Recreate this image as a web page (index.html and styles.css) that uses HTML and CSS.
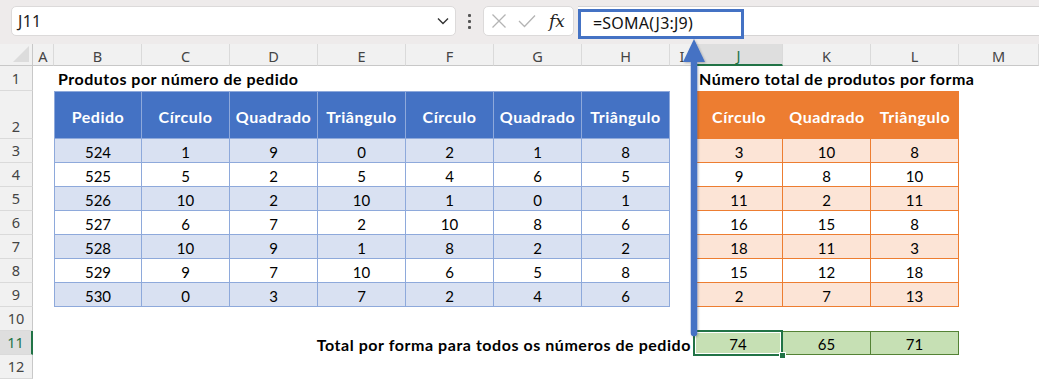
FILE: index.html
```html
<!DOCTYPE html>
<html>
<head>
<meta charset="utf-8">
<link rel="stylesheet" href="styles.css">
</head>
<body>
<div class="topbar">
  <div class="namebox">
    <span class="nb-text">J11</span>
    <svg class="chev" width="12" height="8" viewBox="0 0 12 8"><path d="M1 1.5 L6 6.5 L11 1.5" fill="none" stroke="#333" stroke-width="1.4"/></svg>
  </div>
  <div class="dots"><i></i><i></i><i></i></div>
  <div class="fxbox">
    <svg width="16" height="16" viewBox="0 0 16 16"><path d="M1.5 1.5 L14.5 14.5 M14.5 1.5 L1.5 14.5" stroke="#b4b4b4" stroke-width="1.3" fill="none"/></svg>
    <svg width="18" height="14" viewBox="0 0 18 14"><path d="M1 7 L6.5 12.5 L17 1.5" stroke="#b4b4b4" stroke-width="1.3" fill="none"/></svg>
    <span class="fx">fx</span>
  </div>
  <div class="formula">
    <div class="fbox">=SOMA(J3:J9)</div>
  </div>
</div>

<div class="sheet">
  <!-- column header row -->
  <div class="corner"></div>
  <div class="ch">A</div>
  <div class="ch">B</div>
  <div class="ch">C</div>
  <div class="ch">D</div>
  <div class="ch">E</div>
  <div class="ch">F</div>
  <div class="ch">G</div>
  <div class="ch">H</div>
  <div class="ch">I</div>
  <div class="ch sel">J</div>
  <div class="ch">K</div>
  <div class="ch">L</div>
  <div class="ch">M</div>

  <!-- row 1 -->
  <div class="rh">1</div>
  <div class="c"></div>
  <div class="c title span7">Produtos por número de pedido</div>
  <div class="c"></div>
  <div class="c title span4">Número total de produtos por forma</div>

  <!-- row 2 -->
  <div class="rh">2</div>
  <div class="c"></div>
  <div class="bh first">Pedido</div>
  <div class="bh">Círculo</div>
  <div class="bh">Quadrado</div>
  <div class="bh">Triângulo</div>
  <div class="bh">Círculo</div>
  <div class="bh">Quadrado</div>
  <div class="bh">Triângulo</div>
  <div class="c"></div>
  <div class="oh">Círculo</div>
  <div class="oh">Quadrado</div>
  <div class="oh">Triângulo</div>
  <div class="c"></div>

  <!-- row 3 -->
  <div class="rh">3</div>
  <div class="c"></div>
  <div class="bd alt first">524</div><div class="bd alt">1</div><div class="bd alt">9</div><div class="bd alt">0</div><div class="bd alt">2</div><div class="bd alt">1</div><div class="bd alt">8</div>
  <div class="c"></div>
  <div class="od alt ofirst">3</div><div class="od alt">10</div><div class="od alt">8</div>
  <div class="c"></div>

  <!-- row 4 -->
  <div class="rh">4</div>
  <div class="c"></div>
  <div class="bd first">525</div><div class="bd">5</div><div class="bd">2</div><div class="bd">5</div><div class="bd">4</div><div class="bd">6</div><div class="bd">5</div>
  <div class="c"></div>
  <div class="od ofirst">9</div><div class="od">8</div><div class="od">10</div>
  <div class="c"></div>

  <!-- row 5 -->
  <div class="rh">5</div>
  <div class="c"></div>
  <div class="bd alt first">526</div><div class="bd alt">10</div><div class="bd alt">2</div><div class="bd alt">10</div><div class="bd alt">1</div><div class="bd alt">0</div><div class="bd alt">1</div>
  <div class="c"></div>
  <div class="od alt ofirst">11</div><div class="od alt">2</div><div class="od alt">11</div>
  <div class="c"></div>

  <!-- row 6 -->
  <div class="rh">6</div>
  <div class="c"></div>
  <div class="bd first">527</div><div class="bd">6</div><div class="bd">7</div><div class="bd">2</div><div class="bd">10</div><div class="bd">8</div><div class="bd">6</div>
  <div class="c"></div>
  <div class="od ofirst">16</div><div class="od">15</div><div class="od">8</div>
  <div class="c"></div>

  <!-- row 7 -->
  <div class="rh">7</div>
  <div class="c"></div>
  <div class="bd alt first">528</div><div class="bd alt">10</div><div class="bd alt">9</div><div class="bd alt">1</div><div class="bd alt">8</div><div class="bd alt">2</div><div class="bd alt">2</div>
  <div class="c"></div>
  <div class="od alt ofirst">18</div><div class="od alt">11</div><div class="od alt">3</div>
  <div class="c"></div>

  <!-- row 8 -->
  <div class="rh">8</div>
  <div class="c"></div>
  <div class="bd first">529</div><div class="bd">9</div><div class="bd">7</div><div class="bd">10</div><div class="bd">6</div><div class="bd">5</div><div class="bd">8</div>
  <div class="c"></div>
  <div class="od ofirst">15</div><div class="od">12</div><div class="od">18</div>
  <div class="c"></div>

  <!-- row 9 -->
  <div class="rh">9</div>
  <div class="c"></div>
  <div class="bd alt first">530</div><div class="bd alt">0</div><div class="bd alt">3</div><div class="bd alt">7</div><div class="bd alt">2</div><div class="bd alt">4</div><div class="bd alt">6</div>
  <div class="c"></div>
  <div class="od alt ofirst">2</div><div class="od alt">7</div><div class="od alt">13</div>
  <div class="c"></div>

  <!-- row 10 -->
  <div class="rh">10</div>
  <div class="c spanrest"></div>

  <!-- row 11 -->
  <div class="rh sel">11</div>
  <div class="c"></div>
  <div class="c total span8">Total por forma para todos os números de pedido</div>
  <div class="gd gfirst active">74</div>
  <div class="gd">65</div>
  <div class="gd">71</div>
  <div class="c"></div>

  <!-- row 12 -->
  <div class="rh">12</div>
  <div class="c spanrest"></div>
</div>

<svg class="arrow" width="30" height="310" viewBox="0 0 30 310">
  <defs>
    <filter id="sh" x="-50%" y="-10%" width="200%" height="120%">
      <feDropShadow dx="1" dy="1" stdDeviation="1.2" flood-color="#000" flood-opacity="0.25"/>
    </filter>
  </defs>
  <g filter="url(#sh)">
    <line x1="15" y1="22" x2="15" y2="295" stroke="#4472c4" stroke-width="6.5" stroke-linecap="round"/>
    <polygon points="15,1 26,24 4,24" fill="#4472c4"/>
  </g>
</svg>
</body>
</html>
```

FILE: styles.css
```css
html, body {
  margin: 0;
  padding: 0;
}
body {
  width: 1039px;
  height: 381px;
  overflow: hidden;
  background: #ffffff;
  position: relative;
  font-family: Lato, "Noto Sans", sans-serif;
}

/* ---------- formula bar ---------- */
.topbar {
  height: 44px;
  box-sizing: border-box;
  background: #eeebeb;
  display: flex;
  align-items: flex-start;
  padding: 6px 0 0 11px;
}
.namebox {
  width: 445px;
  height: 30px;
  box-sizing: border-box;
  background: #fff;
  border: 1px solid #dcdada;
  border-radius: 5px;
  display: flex;
  align-items: center;
  justify-content: space-between;
  padding: 0 6px 0 6px;
  font-family: "Noto Sans", sans-serif;
  font-size: 16px;
  color: #222;
}
.nb-text { letter-spacing: 0.3px; }
.dots {
  width: 27px;
  height: 30px;
  display: flex;
  flex-direction: column;
  align-items: center;
  justify-content: center;
  gap: 3px;
}
.dots i {
  display: block;
  width: 3px;
  height: 3px;
  background: #555;
  border-radius: 1px;
}
.fxbox {
  width: 91px;
  height: 30px;
  box-sizing: border-box;
  background: #fff;
  border: 1px solid #dcdada;
  border-radius: 5px;
  display: flex;
  align-items: center;
  gap: 11px;
  padding-left: 7px;
}
.fx {
  font-family: "DejaVu Serif", "Liberation Serif", serif;
  font-style: italic;
  font-size: 17px;
  color: #222;
  margin-left: 2px;
}
.formula {
  flex: 1;
  height: 30px;
  margin-left: 4px;
  box-sizing: border-box;
  background: #fff;
  border-top: 1px solid #d6d4d4;
  border-bottom: 1px solid #d6d4d4;
  position: relative;
}
.fbox {
  position: absolute;
  left: 0;
  top: 2px;
  width: 166px;
  height: 30px;
  box-sizing: border-box;
  border: 3px solid #4472c4;
  background: #fff;
  font-family: "Noto Sans", sans-serif;
  font-size: 16px;
  letter-spacing: 0.2px;
  color: #111;
  padding-left: 12px;
  line-height: 23px;
}

/* ---------- sheet grid ---------- */
.sheet {
  display: grid;
  grid-template-columns: 33px 21px repeat(7, 88px) 25px repeat(3, 88px) 1fr;
  grid-template-rows: 22px 25px 48px repeat(10, 24px);
  font-size: 15px;
  color: #000;
}
.corner {
  background: #f1f1f1;
  border-right: 1px solid #c8c8c8;
  border-bottom: 1px solid #c8c8c8;
  position: relative;
}
.corner::after {
  content: "";
  position: absolute;
  right: 3px;
  bottom: 3px;
  width: 0;
  height: 0;
  border-left: 16px solid transparent;
  border-bottom: 16px solid #dcdcdc;
}
.ch {
  background: #f1f1f1;
  border-right: 1px solid #dadada;
  border-bottom: 1px solid #c8c8c8;
  font-family: "Noto Sans", sans-serif;
  font-size: 14.5px;
  color: #444;
  display: flex;
  align-items: center;
  justify-content: center;
  padding-top: 2px;
  box-sizing: border-box;
}
.ch.sel {
  background: #dedede;
  border-bottom: 2px solid #217346;
  color: #217346;
}
.rh {
  background: #f1f1f1;
  border-bottom: 1px solid #dadada;
  border-right: 1px solid #c8c8c8;
  font-family: "Noto Sans", sans-serif;
  font-size: 14.5px;
  color: #444;
  display: flex;
  align-items: flex-end;
  justify-content: center;
  padding-bottom: 2px;
  box-sizing: border-box;
}
.rh.sel {
  background: #dedede;
  border-right: 2px solid #217346;
  color: #217346;
}
.c { background: #fff; }
.span7 { grid-column: span 7; }
.span8 { grid-column: span 8; }
.span4 { grid-column: span 4; }
.spanrest { grid-column: span 13; }
.title {
  font-weight: 700;
  font-size: 16px;
  letter-spacing: 0.5px;
  display: flex;
  align-items: flex-end;
  padding: 0 0 3px 4px;
  white-space: nowrap;
}
.total {
  font-weight: 700;
  font-size: 16px;
  letter-spacing: 0.55px;
  display: flex;
  align-items: center;
  justify-content: flex-end;
  padding: 2px 4px 0 0;
  white-space: nowrap;
}

/* tables */
.bh, .bd, .oh, .od, .gd {
  box-sizing: border-box;
  display: flex;
  align-items: center;
  justify-content: center;
  padding-top: 2px;
}
.bh, .oh {
  font-weight: 700;
  font-size: 16px;
  letter-spacing: 0.5px;
  color: #fff;
  white-space: nowrap;
}
.bh {
  background: #4472c4;
  border-top: 1px solid #8ea9db;
  border-right: 1px solid #8ea9db;
  border-bottom: 1px solid #8ea9db;
}
.bd {
  background: #fff;
  border-right: 1px solid #8ea9db;
  border-bottom: 1px solid #8ea9db;
}
.bd.alt { background: #d9e1f2; }
.bh.first, .bd.first { border-left: 1px solid #8ea9db; }

/* orange table */
.oh { background: #ed7d31; }
.od {
  background: #fff;
  border-right: 1px solid #ed7d31;
  border-bottom: 1px solid #ed7d31;
}
.od.alt { background: #fce4d6; }
.od.ofirst { border-left: 1px solid #ed7d31; }

/* green totals */
.gd {
  background: #c6e0b4;
  border-top: 1px solid #548235;
  border-right: 1px solid #548235;
  border-bottom: 1px solid #548235;
}
.gd.gfirst { border-left: 1px solid #548235; }
.gd.active {
  position: relative;
  border: 2px solid #217346;
  box-shadow: inset 0 0 0 1px #fff;
  margin: -1px 0 -1px -2px;
}
.gd.active::after {
  content: "";
  position: absolute;
  right: -5px;
  bottom: -5px;
  width: 5px;
  height: 5px;
  background: #217346;
  border: 1px solid #fff;
}

/* annotation arrow */
.arrow {
  position: absolute;
  left: 679px;
  top: 38px;
}
```
